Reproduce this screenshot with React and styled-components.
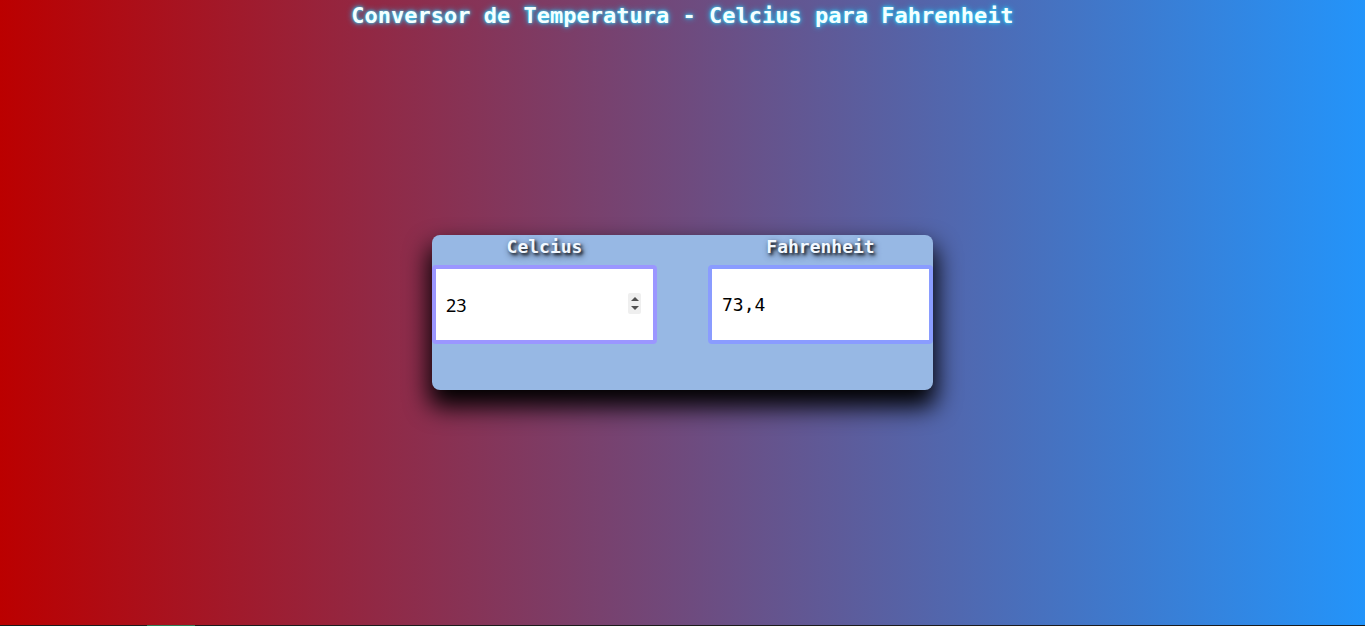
import React, { useState } from 'react';
import styled, { createGlobalStyle } from 'styled-components';

const GlobalStyle = createGlobalStyle`
  html, body {
    margin: 0;
    padding: 0;
    height: 100%;
  }
  body {
    font-family: "DejaVu Sans Mono", "Liberation Mono", monospace;
  }
  #root {
    height: 100%;
  }
`;

const Page = styled.div`
  height: 100vh;
  display: grid;
  grid-template-rows: 1fr 1px;
  background: linear-gradient(to right, #bb0000, #2394fa);
  overflow: hidden;
`;

const Stage = styled.main`
  display: grid;
  place-items: center;
  & > * {
    grid-area: 1 / 1;
  }
`;

const Title = styled.h1`
  align-self: start;
  margin: 3px 0 0;
  font-size: 22px;
  font-weight: bold;
  color: #f4ffff;
  text-shadow: 0 0 3px #33e0ff, 0 0 6px #1ec8ff;
`;

const Card = styled.section`
  width: 501px;
  height: 155px;
  box-sizing: border-box;
  background: #97b8e4;
  border-radius: 8px;
  box-shadow: 0 14px 24px 3px #000;
  display: grid;
  grid-template-columns: 225px 225px;
  justify-content: space-between;
  align-content: start;
`;

const Field = styled.div`
  display: flex;
  flex-direction: column;
  align-items: center;
`;

const Label = styled.label`
  height: 30px;
  padding-top: 1px;
  box-sizing: border-box;
  line-height: 21px;
  font-size: 18px;
  font-weight: bold;
  color: #f2f8ff;
  text-shadow: 2px 2px 3px #1e2530, 2px 3px 6px #2c3440;
`;

const InputWrap = styled.div`
  position: relative;
  width: 100%;
`;

const Input = styled.input`
  display: block;
  width: 100%;
  height: 79px;
  box-sizing: border-box;
  margin: 0;
  padding: 0 10px;
  border: 4px solid ${(p) => p.$border};
  border-radius: 4px;
  background: #fff;
  color: #000;
  font-family: ${(p) => (p.$mono ? '"DejaVu Sans Mono", monospace' : '"Noto Sans", "Open Sans", sans-serif')};
  font-size: 18px;
  outline: none;
  -moz-appearance: textfield;
  &::-webkit-inner-spin-button,
  &::-webkit-outer-spin-button {
    -webkit-appearance: none;
    margin: 0;
  }
`;

const Spinner = styled.div`
  position: absolute;
  right: 16px;
  top: 28px;
  width: 13px;
  height: 21px;
  background: #efefef;
  border-radius: 2px;
  display: flex;
  flex-direction: column;
  align-items: center;
  justify-content: center;
  gap: 5px;
`;

const Arrow = styled.span`
  width: 0;
  height: 0;
  border-left: 4px solid transparent;
  border-right: 4px solid transparent;
  ${(p) => (p.$down ? 'border-top: 4px solid #505050;' : 'border-bottom: 4px solid #505050;')}
`;

const Footer = styled.div`
  background: #1c1c1c;
  display: flex;
`;

const Marker = styled.span`
  margin-left: 147px;
  width: 48px;
  background: #2e7a55;
`;

export default function App() {
  const [celsius, setCelsius] = useState('23');
  const f = celsius === '' ? '' : String(Math.round((parseFloat(celsius) * 9 / 5 + 32) * 10) / 10).replace('.', ',');

  return (
    <>
      <GlobalStyle />
      <Page>
        <Stage>
          <Title>Conversor de Temperatura - Celcius para Fahrenheit</Title>
          <Card>
            <Field>
              <Label htmlFor="c">Celcius</Label>
              <InputWrap>
                <Input
                  id="c"
                  type="number"
                  autoFocus
                  value={celsius}
                  onChange={(e) => setCelsius(e.target.value)}
                  $border="#9b96ff"
                />
                <Spinner>
                  <Arrow />
                  <Arrow $down />
                </Spinner>
              </InputWrap>
            </Field>
            <Field>
              <Label htmlFor="f">Fahrenheit</Label>
              <InputWrap>
                <Input id="f" type="text" readOnly value={f} $border="#8a9cff" $mono />
              </InputWrap>
            </Field>
          </Card>
        </Stage>
        <Footer>
          <Marker />
        </Footer>
      </Page>
    </>
  );
}
